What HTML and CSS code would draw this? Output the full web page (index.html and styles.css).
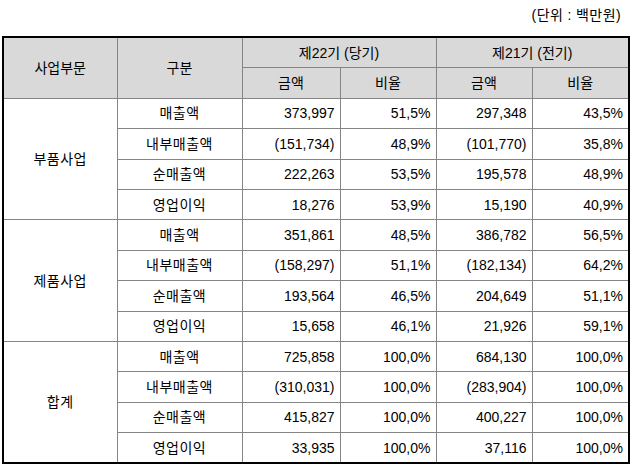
FILE: index.html
```html
<!DOCTYPE html>
<html lang="ko">
<head>
<meta charset="utf-8">
<link rel="stylesheet" href="styles.css">
</head>
<body>
<div class="page">
  <div class="unit">(단위 : 백만원)</div>
  <table class="fin">
    <colgroup>
      <col class="c1"><col class="c2"><col class="c3"><col class="c4"><col class="c5"><col class="c6">
    </colgroup>
    <thead>
      <tr>
        <th rowspan="2">사업부문</th>
        <th rowspan="2">구분</th>
        <th colspan="2">제22기 (당기)</th>
        <th colspan="2">제21기 (전기)</th>
      </tr>
      <tr>
        <th>금액</th><th>비율</th><th>금액</th><th>비율</th>
      </tr>
    </thead>
    <tbody>
      <tr><td rowspan="4" class="seg">부품사업</td><td class="cat">매출액</td><td>373,997</td><td>51,5%</td><td>297,348</td><td>43,5%</td></tr>
      <tr><td class="cat">내부매출액</td><td>(151,734)</td><td>48,9%</td><td>(101,770)</td><td>35,8%</td></tr>
      <tr><td class="cat">순매출액</td><td>222,263</td><td>53,5%</td><td>195,578</td><td>48,9%</td></tr>
      <tr><td class="cat">영업이익</td><td>18,276</td><td>53,9%</td><td>15,190</td><td>40,9%</td></tr>
      <tr><td rowspan="4" class="seg">제품사업</td><td class="cat">매출액</td><td>351,861</td><td>48,5%</td><td>386,782</td><td>56,5%</td></tr>
      <tr><td class="cat">내부매출액</td><td>(158,297)</td><td>51,1%</td><td>(182,134)</td><td>64,2%</td></tr>
      <tr><td class="cat">순매출액</td><td>193,564</td><td>46,5%</td><td>204,649</td><td>51,1%</td></tr>
      <tr><td class="cat">영업이익</td><td>15,658</td><td>46,1%</td><td>21,926</td><td>59,1%</td></tr>
      <tr><td rowspan="4" class="seg">합계</td><td class="cat">매출액</td><td>725,858</td><td>100,0%</td><td>684,130</td><td>100,0%</td></tr>
      <tr><td class="cat">내부매출액</td><td>(310,031)</td><td>100,0%</td><td>(283,904)</td><td>100,0%</td></tr>
      <tr><td class="cat">순매출액</td><td>415,827</td><td>100,0%</td><td>400,227</td><td>100,0%</td></tr>
      <tr><td class="cat">영업이익</td><td>33,935</td><td>100,0%</td><td>37,116</td><td>100,0%</td></tr>
    </tbody>
  </table>
</div>
</body>
</html>
```

FILE: styles.css
```css
html, body {
  margin: 0;
  padding: 0;
  background: #ffffff;
}
.page {
  width: 633px;
  font-family: "Liberation Sans", "Noto Sans CJK KR", sans-serif;
  font-size: 14px;
  color: #000;
}
.unit {
  text-align: right;
  padding: 6px 12px 0 0;
  height: 30px;
  line-height: 18px;
  letter-spacing: 0.4px;
}
.fin {
  margin-left: 2px;
  width: 627px;
  border-collapse: collapse;
  table-layout: fixed;
  border: 2px solid #000;
}
.c1 { width: 114px; }
.c2 { width: 125px; }
.c3 { width: 98px; }
.c4 { width: 96px; }
.c5 { width: 96px; }
.c6 { width: 97px; }
.fin th, .fin td {
  border: 1px solid #858585;
  height: 29.4px;
  padding: 0 5px;
  font-weight: normal;
  white-space: nowrap;
  line-height: 16px;
}
.fin th {
  background: #d9d9d9;
  text-align: center;
}
.fin td {
  text-align: right;
}
.fin td.seg, .fin td.cat {
  text-align: center;
  letter-spacing: 0.5px;
}
```
